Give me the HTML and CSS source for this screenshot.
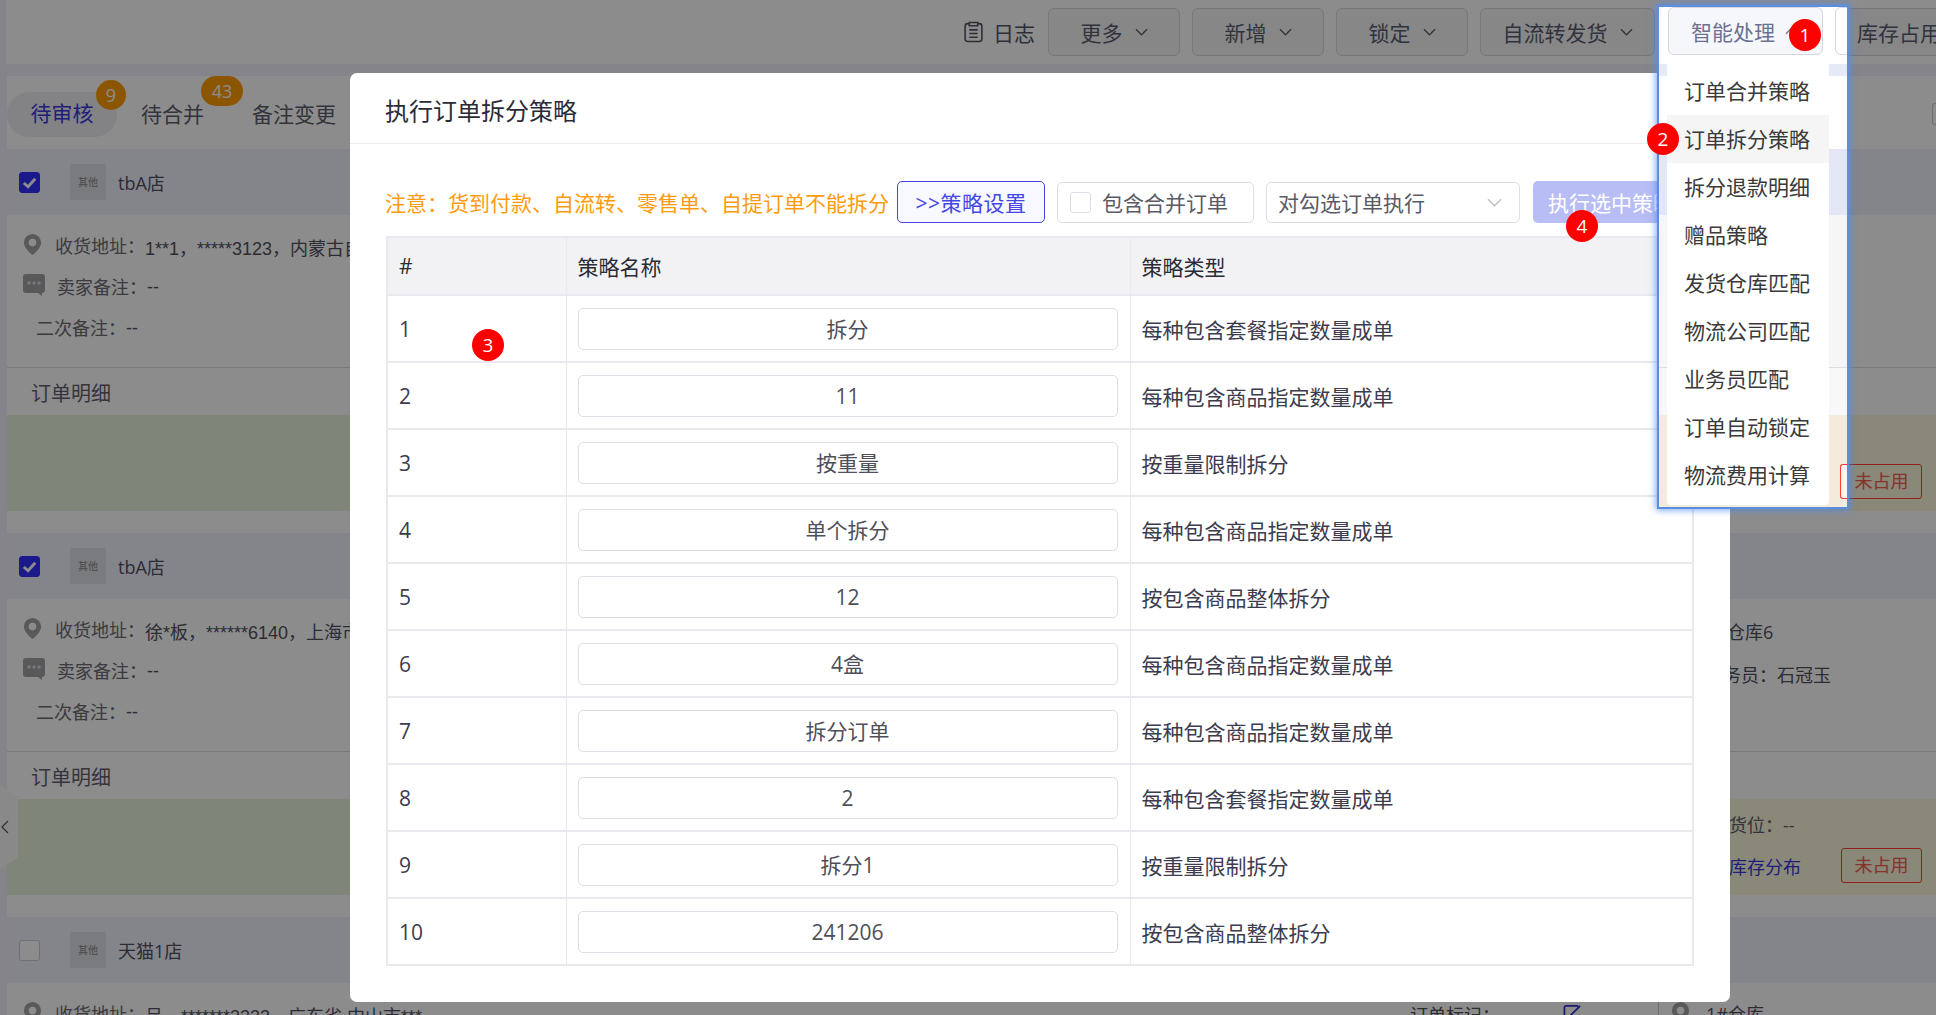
FILE: index.html
```html
<!DOCTYPE html>
<html lang="zh-CN">
<head>
<meta charset="UTF-8">
<title>执行订单拆分策略</title>
<link rel="stylesheet" href="styles.css">
</head>
<body>
<div class="page">
    <div class="topbar">
        <span class="log">
            <svg class="log-icon" viewBox="0 0 20 22"><path d="M6 3H4.500C3 3 2 4 2 5.500v12C2 19 3 20 4.500 20h11c1.500 0 2.500-1 2.500-2.500v-12C18 4 17 3 15.500 3H14M6 2h8v3H6zM6 9h8M6 12.500h8M6 16h8" fill="none" stroke="currentColor" stroke-width="1.500"/></svg>
            日志
        </span>
        <button class="top-btn">更多<svg class="chev" viewBox="0 0 14 8"><path d="M1 1l6 6 6-6" fill="none" stroke="currentColor" stroke-width="1.300"/></svg></button>
        <button class="top-btn">新增<svg class="chev" viewBox="0 0 14 8"><path d="M1 1l6 6 6-6" fill="none" stroke="currentColor" stroke-width="1.300"/></svg></button>
        <button class="top-btn">锁定<svg class="chev" viewBox="0 0 14 8"><path d="M1 1l6 6 6-6" fill="none" stroke="currentColor" stroke-width="1.300"/></svg></button>
        <button class="top-btn top-btn-wide">自流转发货<svg class="chev" viewBox="0 0 14 8"><path d="M1 1l6 6 6-6" fill="none" stroke="currentColor" stroke-width="1.300"/></svg></button>
        <button class="top-btn top-btn-smart"></button>
        <button class="top-btn top-btn-stock">库存占用</button>
    </div>

    <div class="panel">
        <div class="tabs">
            <div class="tab tab-active">待审核<span class="tab-count tab-count-one">9</span></div>
            <div class="tab">待合并<span class="tab-count tab-count-two">43</span></div>
            <div class="tab">备注变更</div>
            <div class="tab-box"></div>
        </div>

        <div class="card">
            <div class="card-head">
                <span class="check check-on"><svg viewBox="0 0 20 20"><path d="M4 10.500l4.500 4L16 6" fill="none" stroke="#fff" stroke-width="3"/></svg></span>
                <span class="shop-logo">其他</span>
                <span class="shop-name">tbA店</span>
            </div>
            <div class="card-info">
                <div class="info-left">
                    <div class="info-row">
                        <svg class="pin" viewBox="0 0 20 24"><path d="M10 1a9 9 0 0 0-9 9c0 5 5 10 9 13 4-3 9-8 9-13a9 9 0 0 0-9-9zm0 5a4 4 0 1 1 0 8 4 4 0 0 1 0-8z" fill="#a3a3a8" fill-rule="evenodd"/></svg>
                        <span class="label">收货地址&#xFF1A;</span><span class="value">1**1&#xFF0C;*****3123&#xFF0C;内蒙古自治区</span>
                    </div>
                    <div class="info-row">
                        <svg class="chat" viewBox="0 0 24 24"><path d="M4 1h16a3 3 0 0 1 3 3v13a3 3 0 0 1-3 3v3l-4-3H4a3 3 0 0 1-3-3V4a3 3 0 0 1 3-3z" fill="#a3a3a8"/><circle cx="7" cy="10" r="1.700" fill="#ddd"/><circle cx="12" cy="10" r="1.700" fill="#ddd"/><circle cx="17" cy="10" r="1.700" fill="#ddd"/></svg>
                        <span class="label">卖家备注&#xFF1A;</span><span class="value">--</span>
                    </div>
                    <div class="info-row info-row-plain"><span class="label">二次备注&#xFF1A;</span><span class="value">--</span></div>
                </div>
            </div>
            <div class="detail-title">订单明细</div>
            <div class="detail-row">
                <div class="detail-main"></div>
                <div class="detail-side">
                    <div class="side-row"></div>
                    <div class="side-row side-row-tag"><span class="tag">未占用</span></div>
                </div>
            </div>
        </div>

        <div class="card">
            <div class="card-head">
                <span class="check check-on"><svg viewBox="0 0 20 20"><path d="M4 10.500l4.500 4L16 6" fill="none" stroke="#fff" stroke-width="3"/></svg></span>
                <span class="shop-logo">其他</span>
                <span class="shop-name">tbA店</span>
            </div>
            <div class="card-info">
                <div class="info-left">
                    <div class="info-row">
                        <svg class="pin" viewBox="0 0 20 24"><path d="M10 1a9 9 0 0 0-9 9c0 5 5 10 9 13 4-3 9-8 9-13a9 9 0 0 0-9-9zm0 5a4 4 0 1 1 0 8 4 4 0 0 1 0-8z" fill="#a3a3a8" fill-rule="evenodd"/></svg>
                        <span class="label">收货地址&#xFF1A;</span><span class="value">徐*板&#xFF0C;******6140&#xFF0C;上海市</span>
                    </div>
                    <div class="info-row">
                        <svg class="chat" viewBox="0 0 24 24"><path d="M4 1h16a3 3 0 0 1 3 3v13a3 3 0 0 1-3 3v3l-4-3H4a3 3 0 0 1-3-3V4a3 3 0 0 1 3-3z" fill="#a3a3a8"/><circle cx="7" cy="10" r="1.700" fill="#ddd"/><circle cx="12" cy="10" r="1.700" fill="#ddd"/><circle cx="17" cy="10" r="1.700" fill="#ddd"/></svg>
                        <span class="label">卖家备注&#xFF1A;</span><span class="value">--</span>
                    </div>
                    <div class="info-row info-row-plain"><span class="label">二次备注&#xFF1A;</span><span class="value">--</span></div>
                </div>
                <div class="info-right">
                    <div class="info-row">1#仓库6</div>
                    <div class="info-row">业务员&#xFF1A;石冠玉</div>
                </div>
            </div>
            <div class="detail-title">订单明细</div>
            <div class="detail-row">
                <div class="detail-main"></div>
                <div class="detail-side">
                    <div class="side-row">货位&#xFF1A;--</div>
                    <div class="side-row side-row-tag"><span class="stock-link">库存分布</span><span class="tag">未占用</span></div>
                </div>
            </div>
        </div>

        <div class="card">
            <div class="card-head">
                <span class="check"></span>
                <span class="shop-logo">其他</span>
                <span class="shop-name">天猫1店</span>
            </div>
            <div class="card-info">
                <div class="info-left">
                    <div class="info-row">
                        <svg class="pin" viewBox="0 0 20 24"><path d="M10 1a9 9 0 0 0-9 9c0 5 5 10 9 13 4-3 9-8 9-13a9 9 0 0 0-9-9zm0 5a4 4 0 1 1 0 8 4 4 0 0 1 0-8z" fill="#a3a3a8" fill-rule="evenodd"/></svg>
                        <span class="label">收货地址&#xFF1A;</span><span class="value">吕&#xFF0C;*******3333&#xFF0C;广东省 中山市***</span>
                    </div>
                </div>
                <div class="info-mark">
                    <span>订单标记&#xFF1A;</span>
                    <svg class="edit" viewBox="0 0 20 20"><path d="M16 2H3a1.500 1.500 0 0 0-1.500 1.500V18M8 12L18 2" fill="none" stroke="#2f2fd0" stroke-width="1.800"/></svg>
                </div>
                <div class="info-store">
                    <svg class="pin" viewBox="0 0 20 24"><path d="M10 1a9 9 0 0 0-9 9c0 5 5 10 9 13 4-3 9-8 9-13a9 9 0 0 0-9-9zm0 5a4 4 0 1 1 0 8 4 4 0 0 1 0-8z" fill="#a3a3a8" fill-rule="evenodd"/></svg>
                    <span>1#仓库</span>
                </div>
            </div>
        </div>
    </div>
</div>

<div class="side-toggle"><svg viewBox="0 0 8 14"><path d="M7 1L1 7l6 6" fill="none" stroke="#555" stroke-width="1.200"/></svg></div>

<div class="overlay"></div>

<div class="modal">
    <div class="modal-title">执行订单拆分策略</div>
    <div class="modal-body">
        <div class="toolbar">
            <span class="warn">注意&#xFF1A;货到付款、自流转、零售单、自提订单不能拆分</span>
            <button class="tool-btn tool-btn-setting">&gt;&gt;策略设置</button>
            <label class="tool-check"><span class="tool-box"></span>包含合并订单</label>
            <div class="tool-select">对勾选订单执行<svg class="select-chev" viewBox="0 0 16 9"><path d="M1 1l7 7 7-7" fill="none" stroke="#bdbdc4" stroke-width="1.400"/></svg></div>
            <button class="tool-btn tool-btn-run">执行选中策略</button>
        </div>
        <table class="rules">
            <thead>
                <tr><th class="col-no">#</th><th class="col-name">策略名称</th><th>策略类型</th></tr>
            </thead>
            <tbody>
                <tr><td>1</td><td><div class="name-box">拆分</div></td><td>每种包含套餐指定数量成单</td></tr>
                <tr><td>2</td><td><div class="name-box">11</div></td><td>每种包含商品指定数量成单</td></tr>
                <tr><td>3</td><td><div class="name-box">按重量</div></td><td>按重量限制拆分</td></tr>
                <tr><td>4</td><td><div class="name-box">单个拆分</div></td><td>每种包含商品指定数量成单</td></tr>
                <tr><td>5</td><td><div class="name-box">12</div></td><td>按包含商品整体拆分</td></tr>
                <tr><td>6</td><td><div class="name-box">4盒</div></td><td>每种包含商品指定数量成单</td></tr>
                <tr><td>7</td><td><div class="name-box">拆分订单</div></td><td>每种包含商品指定数量成单</td></tr>
                <tr><td>8</td><td><div class="name-box">2</div></td><td>每种包含套餐指定数量成单</td></tr>
                <tr><td>9</td><td><div class="name-box">拆分1</div></td><td>按重量限制拆分</td></tr>
                <tr><td>10</td><td><div class="name-box">241206</div></td><td>按包含商品整体拆分</td></tr>
            </tbody>
        </table>
    </div>
</div>

<div class="spot">
    <div class="spot-top">
        <button class="spot-btn">智能处理<svg class="chev" viewBox="0 0 14 8"><path d="M1 7l6-6 6 6" fill="none" stroke="currentColor" stroke-width="1.300"/></svg></button>
        <span class="spot-next"></span>
    </div>
    <div class="spot-gap"></div>
    <div class="spot-tabs"></div>
    <div class="spot-head"></div>
    <div class="spot-info"></div>
    <div class="spot-title"></div>
    <div class="spot-side"><span class="spot-tag"></span></div>
    <ul class="menu">
        <li>订单合并策略</li>
        <li class="menu-hover">订单拆分策略</li>
        <li>拆分退款明细</li>
        <li>赠品策略</li>
        <li>发货仓库匹配</li>
        <li>物流公司匹配</li>
        <li>业务员匹配</li>
        <li>订单自动锁定</li>
        <li>物流费用计算</li>
    </ul>
</div>

<span class="step step-1">1</span>
<span class="step step-2">2</span>
<span class="step step-3">3</span>
<span class="step step-4">4</span>
</body>
</html>
```

FILE: styles.css
```css
* {
    box-sizing: border-box;
}
html, body {
    height: 100%;
}
body {
    margin: 0;
    overflow: hidden;
    position: relative;
    background: #f1f1fb;
    color: #50505f;
    font-family: "Open Sans", "Noto Sans CJK SC", sans-serif;
    font-size: 21px;
}
button {
    font-family: inherit;
    font-size: 21px;
}

/* page behind the dialog */
.page {
    padding-left: 7px;
    height: 100%;
    overflow: hidden;
}
.topbar {
    display: flex;
    align-items: center;
    gap: 12px;
    height: 64px;
    margin-left: -1px;
    padding-left: 957px;
    background: #fff;
    white-space: nowrap;
}
.log {
    display: flex;
    align-items: center;
    gap: 9px;
    width: 73px;
    flex: none;
    color: #555568;
}
.log-icon {
    width: 21px;
    height: 24px;
    flex: none;
}
.top-btn {
    display: flex;
    align-items: center;
    justify-content: center;
    gap: 12px;
    flex: none;
    width: 132px;
    height: 48px;
    background: #f6f6f8;
    border: 1px solid #d8d8e0;
    border-radius: 6px;
    color: #5c5c70;
}
.top-btn-wide {
    width: 175px;
}
.top-btn-smart {
    width: 155px;
}
.top-btn-stock {
    justify-content: flex-start;
    width: 160px;
    padding-left: 22px;
}
.chev {
    width: 13px;
    height: 8px;
    flex: none;
}
.panel {
    margin-top: 12px;
    background: #fff;
}
.tabs {
    display: flex;
    align-items: center;
    gap: 24px;
    height: 73px;
    padding-top: 3px;
}
.tab {
    position: relative;
    padding-right: 24px;
    margin-top: -2px;
    color: #606070;
}
.tab-active {
    width: 110px;
    height: 45px;
    margin-top: 0;
    padding: 0;
    border-radius: 23px;
    background: #eeeef4;
    color: #3a3ae0;
    line-height: 43px;
    text-align: center;
}
.tab-count {
    position: absolute;
    top: -12px;
    height: 30px;
    border-radius: 15px;
    background: #ff9c00;
    color: #fff;
    font-size: 18px;
    line-height: 30px;
    text-align: center;
}
.tab-count-one {
    left: 89px;
    width: 30px;
}
.tab-count-two {
    left: 60px;
    top: -22px;
    width: 42px;
}
.tab-box {
    width: 4px;
    height: 22px;
    margin-left: auto;
    border: 1px solid #ccc;
    border-right: none;
    border-radius: 3px 0 0 3px;
}
.card {
    height: 384px;
}
.card-head {
    display: flex;
    align-items: center;
    height: 66px;
    padding-left: 12px;
    background: #f1f1fe;
}
.check {
    display: block;
    width: 21px;
    height: 21px;
    flex: none;
    margin-right: 30px;
    background: #fff;
    border: 1px solid #ccc;
    border-radius: 3px;
}
.check-on {
    background: #332fff;
    border-color: #332fff;
}
.check svg {
    display: block;
}
.shop-logo {
    width: 36px;
    height: 36px;
    flex: none;
    margin-right: 12px;
    background: #dfe1e6;
    border-radius: 2px;
    color: #888;
    font-size: 10px;
    line-height: 36px;
    text-align: center;
}
.shop-name {
    font-size: 18px;
    color: #50505f;
}
.card-info {
    display: flex;
    height: 153px;
    padding-top: 9px;
    border-bottom: 1px solid #dcdce2;
    font-size: 18px;
}
.info-left {
    flex: 1;
    min-width: 0;
    padding-left: 16px;
}
.info-right {
    width: 231px;
    flex: none;
    padding-top: 2px;
    color: #50505f;
}
.info-row {
    display: flex;
    align-items: center;
    height: 41px;
    white-space: nowrap;
}
.info-right .info-row + .info-row {
    padding-top: 4px;
}
.info-row-plain {
    padding-left: 13px;
}
.pin {
    width: 19px;
    height: 23px;
    flex: none;
    margin-right: 13px;
}
.chat {
    width: 24px;
    height: 24px;
    flex: none;
    margin: -2px 11px 0 -1px;
}
.label {
    color: #6c6c76;
}
.value {
    padding-top: 4px;
    color: #50505f;
    font-family: "Liberation Sans", "Noto Sans CJK SC", sans-serif;
}
.info-mark {
    display: flex;
    align-items: flex-start;
    justify-content: space-between;
    width: 248px;
    flex: none;
    padding: 9px 76px 0 0;
    color: #50505f;
}
.edit {
    width: 19px;
    height: 19px;
    flex: none;
    margin-top: 3px;
}
.info-store {
    display: flex;
    align-items: center;
    width: 278px;
    height: 41px;
    flex: none;
    padding-left: 12px;
    border-left: 1px solid #c8c8ce;
}
.info-store .pin {
    margin-right: 16px;
}
.detail-title {
    height: 47px;
    padding-left: 24px;
    line-height: 52px;
    font-size: 20px;
    color: #606070;
}
.detail-row {
    display: flex;
    height: 96px;
}
.detail-main {
    flex: 1;
    background: #e7f4dc;
}
.detail-side {
    width: 500px;
    padding: 10px 14px 0 293px;
    background: #fbf7da;
    font-size: 18px;
}
.side-row {
    display: flex;
    align-items: center;
    justify-content: space-between;
    height: 30px;
    color: #60606c;
    white-space: nowrap;
}
.side-row-tag {
    height: 35px;
    margin-top: 9px;
}
.stock-link {
    color: #3a3ae0;
}
.tag {
    width: 81px;
    height: 35px;
    margin-left: auto;
    border: 1px solid #ff3b30;
    border-radius: 3px;
    color: #f0604c;
    line-height: 33px;
    text-align: center;
}
.side-toggle {
    position: absolute;
    left: 0;
    top: 785px;
    display: flex;
    align-items: center;
    width: 18px;
    height: 84px;
    padding-left: 1px;
    background: #fafafa;
    clip-path: polygon(0 0, 100% 14%, 100% 86%, 0 100%);
}
.side-toggle svg {
    width: 8px;
    height: 14px;
}

.overlay {
    position: absolute;
    inset: 0;
    background: rgba(0, 0, 0, 0.45);
}

/* dialog */
.modal {
    position: absolute;
    left: 350px;
    top: 73px;
    width: 1380px;
    height: 929px;
    background: #fff;
    border-radius: 7px;
    color: #30303f;
}
.modal-title {
    height: 71px;
    padding-left: 35px;
    border-bottom: 1px solid #ededf0;
    font-size: 24px;
    line-height: 75px;
    color: #2b2b36;
}
.modal-body {
    padding: 37px 36px 0 36px;
}
.toolbar {
    display: flex;
    align-items: center;
    gap: 12px;
    height: 42px;
    margin: 0 0 13px -1px;
    white-space: nowrap;
}
.warn {
    flex: none;
    margin-right: -4px;
    color: #ff9b0f;
}
.tool-btn {
    height: 42px;
    padding: 0;
    flex: none;
    border-radius: 5px;
}
.tool-btn-setting {
    width: 148px;
    background: #f8f8ff;
    border: 1px solid #4646e6;
    color: #4646e6;
    letter-spacing: 0.5px;
}
.tool-btn-run {
    width: 156px;
    margin-left: 1px;
    background: #b9bdf5;
    border: none;
    color: #fff;
}
.tool-check {
    display: flex;
    align-items: center;
    gap: 11px;
    width: 197px;
    height: 41px;
    flex: none;
    padding-left: 12px;
    border: 1px solid #dcdfe6;
    border-radius: 5px;
    color: #5a5a66;
}
.tool-box {
    width: 21px;
    height: 21px;
    border: 1px solid #dcdfe6;
    border-radius: 3px;
}
.tool-select {
    display: flex;
    align-items: center;
    justify-content: space-between;
    width: 254px;
    height: 41px;
    flex: none;
    padding: 0 17px 0 11px;
    border: 1px solid #dcdfe6;
    border-radius: 5px;
    color: #5a5a66;
}
.select-chev {
    width: 15px;
    height: 9px;
}
.rules {
    width: 1308px;
    table-layout: fixed;
    border-collapse: collapse;
    border: 2px solid #e8e8ee;
}
.rules th, .rules td {
    padding: 0 11px;
    border: 1px solid #e8e8ee;
    border-width: 2px 1px;
    text-align: left;
    font-weight: normal;
}
.rules th {
    height: 58px;
    background: #f2f2f5;
    color: #2b2b36;
}
.rules td {
    height: 67px;
    color: #3c3c4e;
}
.col-no {
    width: 179px;
}
.col-name {
    width: 564px;
}
.name-box {
    height: 42px;
    margin-right: 1px;
    border: 1px solid #dcdfe6;
    border-radius: 5px;
    line-height: 40px;
    text-align: center;
    color: #4f4f5a;
}

/* highlighted frame from the help page */
.spot {
    position: absolute;
    left: 1657px;
    top: 5px;
    width: 192px;
    height: 504px;
    overflow: hidden;
    background: #fff;
    border: 2px solid #5a8fe0;
    box-shadow: 0 0 7px 1px rgba(80, 140, 240, 0.8);
}
.spot-top {
    display: flex;
    gap: 12px;
    height: 57px;
    padding-left: 9px;
}
.spot-btn {
    display: flex;
    align-items: center;
    justify-content: center;
    gap: 10px;
    width: 155px;
    height: 48px;
    flex: none;
    padding: 0 2px 0 0;
    background: #f6f7fb;
    border: 1px solid #d5d6e2;
    border-radius: 6px;
    color: #6d7190;
}
.spot-next {
    width: 30px;
    height: 48px;
    flex: none;
    background: #fff;
    border: 1px solid #d5d6e2;
    border-radius: 6px 0 0 6px;
}
.spot-gap {
    height: 12px;
    background: #e6e9f6;
}
.spot-tabs {
    height: 73px;
    background: #fff;
}
.spot-head {
    height: 66px;
    background: #e3e6f5;
}
.spot-info {
    height: 153px;
    background: #f6f6f7;
    border-bottom: 1px solid #dcdce2;
}
.spot-title {
    height: 47px;
    background: #f8f8f8;
}
.spot-side {
    display: flex;
    justify-content: flex-end;
    height: 92px;
    padding-top: 49px;
    background: #f3ecdc;
}
.spot-tag {
    width: 7px;
    height: 35px;
    background: #f8f7f4;
    border: 1px solid #ff3b30;
    border-right: none;
    border-radius: 3px 0 0 3px;
}
.menu {
    position: absolute;
    left: 8px;
    top: 54px;
    width: 162px;
    height: 444px;
    margin: 0;
    padding: 6px 0;
    list-style: none;
    background: #fff;
    border-radius: 4px;
    color: #3a3a3a;
}
.menu li {
    height: 48px;
    padding-left: 17px;
    line-height: 48px;
    white-space: nowrap;
}
.menu-hover {
    background: #f5f5f5;
}

/* numbered markers */
.step {
    position: absolute;
    width: 32px;
    height: 32px;
    border-radius: 50%;
    background: #f00;
    color: #fff;
    font-size: 19px;
    line-height: 32px;
    text-align: center;
}
.step-1 {
    left: 1789px;
    top: 19px;
}
.step-2 {
    left: 1647px;
    top: 123px;
}
.step-3 {
    left: 472px;
    top: 329px;
}
.step-4 {
    left: 1566px;
    top: 210px;
}
```
